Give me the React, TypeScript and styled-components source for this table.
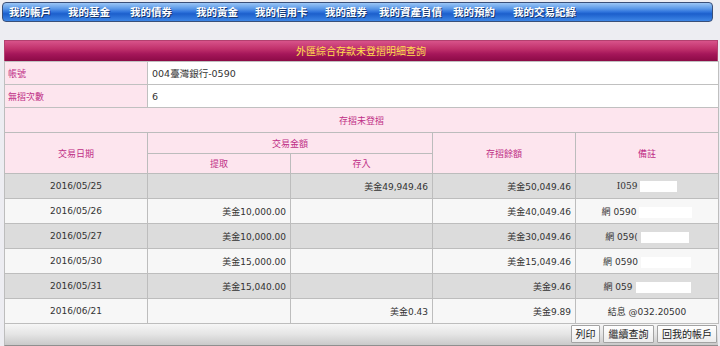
import styled, { createGlobalStyle } from "styled-components";

const GlobalStyle = createGlobalStyle`
  html, body {
    margin: 0;
    padding: 0;
    background: #ededf2;
  }
  body {
    font-family: "DejaVu Sans", "Noto Sans CJK TC", sans-serif;
  }
`;

const Page = styled.div`
  width: 720px;
  height: 346px;
  padding: 2px 0 0 2px;
  box-sizing: border-box;
  background: #ededf2;
  overflow: hidden;
`;

const NavBar = styled.div`
  width: 711px;
  height: 20px;
  box-sizing: border-box;
  border: 1px solid #3a4f78;
  border-radius: 4px;
  background: linear-gradient(
    #9cc6f5 0%,
    #5e9be9 30%,
    #2f73dc 50%,
    #1c5fcc 60%,
    #3e86e6 100%
  );
  display: flex;
  align-items: center;
  padding-left: 6px;
`;

interface NavItemProps {
  $w: number;
}
const NavItem = styled.div<NavItemProps>`
  width: ${(p) => p.$w}px;
  flex: none;
  color: #ffffff;
  font-family: "Noto Sans CJK TC", sans-serif;
  font-size: 10.5px;
  font-weight: 700;
  line-height: 18px;
  text-shadow: 1px 1px 0 #17386e;
  white-space: nowrap;
`;

const Panel = styled.div`
  width: 714px;
  margin: 18px 0 0 2px;
`;

const TitleBar = styled.div`
  height: 21px;
  box-sizing: border-box;
  border: 1px solid #b3406f;
  border-bottom: none;
  background: linear-gradient(#d8538a 0%, #c0306b 40%, #a5165a 65%, #8c0a46 100%);
  color: #ffdf4f;
  font-family: "Noto Sans CJK TC", sans-serif;
  font-size: 10px;
  line-height: 20px;
  text-align: center;
`;

const Grid = styled.table`
  width: 714px;
  border-collapse: collapse;
  table-layout: fixed;
  font-family: "DejaVu Sans", "Noto Sans CJK TC", sans-serif;
  font-size: 9px;
  color: #333333;
`;

interface CellProps {
  $h?: number;
}

const LabelCell = styled.td<CellProps>`
  height: ${(p) => p.$h || 22}px;
  padding: 0 3px;
  border: 1px solid #c0c0c0;
  background: #fde5ee;
  color: #bf2f86;
  font-family: "Noto Sans CJK TC", sans-serif;
`;

const ValueCell = styled.td<CellProps>`
  height: ${(p) => p.$h || 22}px;
  padding: 0 4px;
  border: 1px solid #c0c0c0;
  background: #ffffff;
  color: #333333;
  font-size: 9.5px;
`;

const HeadCell = styled.th<CellProps>`
  height: ${(p) => p.$h || 20}px;
  padding: 0;
  border: 1px solid #bcbcbc;
  background: #fde5ee;
  color: #bf2f86;
  font-family: "Noto Sans CJK TC", sans-serif;
  font-weight: 400;
  font-size: 9px;
  text-align: center;
`;

interface RowProps {
  $alt: boolean;
}
const DataRow = styled.tr<RowProps>`
  background: ${(p) => (p.$alt ? "#f7f7f7" : "#dcdcdc")};
`;

interface DataCellProps {
  $align?: string;
}
const DataCell = styled.td<DataCellProps>`
  height: 24px;
  padding: 0 4px;
  border: 1px solid #bdbdbd;
  text-align: ${(p) => p.$align || "right"};
  white-space: nowrap;
`;

const SerifText = styled.span`
  font-family: "DejaVu Serif", serif;
`;

interface RedactProps {
  $w: number;
}
const Redact = styled.span<RedactProps>`
  display: inline-block;
  width: ${(p) => p.$w}px;
  height: 11px;
  margin-left: 3px;
  background: #ffffff;
  vertical-align: middle;
`;

const FootBar = styled.div`
  height: 22px;
  box-sizing: border-box;
  border-left: 1px solid #bdbdbd;
  border-bottom: 1px solid #8f8f8f;
  background: linear-gradient(#f6f6f6 0%, #e4e4e4 50%, #c9c9c9 100%);
  display: flex;
  justify-content: flex-end;
  align-items: flex-start;
  gap: 3px;
  padding: 1px 1px 0 0;
`;

interface ButtonProps {
  $w: number;
}
const Button = styled.button<ButtonProps>`
  width: ${(p) => p.$w}px;
  height: 18px;
  padding: 0;
  border: 1px solid #a3a3a3;
  border-radius: 1px;
  background: linear-gradient(#ffffff, #ececec);
  color: #222222;
  font-family: "Noto Sans CJK TC", sans-serif;
  font-size: 10px;
  line-height: 16px;
  text-align: center;
  cursor: pointer;
`;

const navItems: [string, number][] = [
  ["我的帳戶", 59],
  ["我的基金", 62],
  ["我的債券", 66],
  ["我的黃金", 59],
  ["我的信用卡", 70],
  ["我的證券", 54],
  ["我的資產負債", 74],
  ["我的預約", 60],
  ["我的交易紀錄", 90],
];

interface Tx {
  date: string;
  out: string;
  in: string;
  bal: string;
  note: React.ReactNode;
}

const rows: Tx[] = [
  {
    date: "2016/05/25",
    out: "",
    in: "美金49,949.46",
    bal: "美金50,049.46",
    note: (
      <>
        <SerifText>I059</SerifText>
        <Redact $w={37} />
      </>
    ),
  },
  {
    date: "2016/05/26",
    out: "美金10,000.00",
    in: "",
    bal: "美金40,049.46",
    note: (
      <>
        網 0590
        <Redact $w={53} />
      </>
    ),
  },
  {
    date: "2016/05/27",
    out: "美金10,000.00",
    in: "",
    bal: "美金30,049.46",
    note: (
      <>
        網 059(
        <Redact $w={48} />
      </>
    ),
  },
  {
    date: "2016/05/30",
    out: "美金15,000.00",
    in: "",
    bal: "美金15,049.46",
    note: (
      <>
        網 0590
        <Redact $w={50} />
      </>
    ),
  },
  {
    date: "2016/05/31",
    out: "美金15,040.00",
    in: "",
    bal: "美金9.46",
    note: (
      <>
        網 059
        <Redact $w={55} />
      </>
    ),
  },
  {
    date: "2016/06/21",
    out: "",
    in: "美金0.43",
    bal: "美金9.89",
    note: "結息 @032.20500",
  },
];

export default function App() {
  return (
    <>
      <GlobalStyle />
      <Page>
        <NavBar>
          {navItems.map(([label, w]) => (
            <NavItem key={label} $w={w}>
              {label}
            </NavItem>
          ))}
        </NavBar>

        <Panel>
          <TitleBar>外匯綜合存款未登摺明細查詢</TitleBar>
          <Grid>
            <colgroup>
              <col style={{ width: 143 }} />
              <col style={{ width: 143 }} />
              <col style={{ width: 142 }} />
              <col style={{ width: 143 }} />
              <col style={{ width: 143 }} />
            </colgroup>
            <tbody>
              <tr>
                <LabelCell>帳號</LabelCell>
                <ValueCell colSpan={4}>004臺灣銀行-0590</ValueCell>
              </tr>
              <tr>
                <LabelCell>無摺次數</LabelCell>
                <ValueCell colSpan={4}>6</ValueCell>
              </tr>
              <tr>
                <HeadCell colSpan={5} $h={24}>
                  存摺未登摺
                </HeadCell>
              </tr>
              <tr>
                <HeadCell rowSpan={2}>交易日期</HeadCell>
                <HeadCell colSpan={2}>交易金額</HeadCell>
                <HeadCell rowSpan={2}>存摺餘額</HeadCell>
                <HeadCell rowSpan={2}>備註</HeadCell>
              </tr>
              <tr>
                <HeadCell $h={19}>提取</HeadCell>
                <HeadCell $h={19}>存入</HeadCell>
              </tr>
              {rows.map((r, i) => (
                <DataRow key={r.date} $alt={i % 2 === 1}>
                  <DataCell $align="center">{r.date}</DataCell>
                  <DataCell>{r.out}</DataCell>
                  <DataCell>{r.in}</DataCell>
                  <DataCell>{r.bal}</DataCell>
                  <DataCell $align="center">{r.note}</DataCell>
                </DataRow>
              ))}
            </tbody>
          </Grid>
          <FootBar>
            <Button $w={29}>列印</Button>
            <Button $w={51}>繼續查詢</Button>
            <Button $w={60}>回我的帳戶</Button>
          </FootBar>
        </Panel>
      </Page>
    </>
  );
}
